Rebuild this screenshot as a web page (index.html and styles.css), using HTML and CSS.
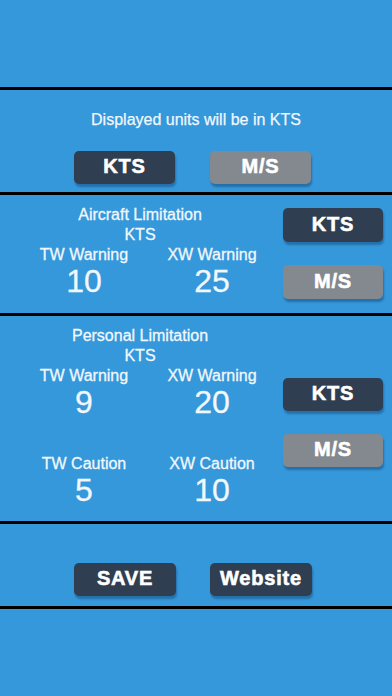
FILE: index.html
```html
<!DOCTYPE html>
<html lang="en">
<head>
<meta charset="UTF-8">
<meta name="viewport" content="width=device-width, initial-scale=1.0">
<title>Wind Limits</title>
<link rel="stylesheet" href="styles.css">
</head>
<body>

<div class="top-space"></div>
<div class="divider"></div>

<!-- units -->
<section class="units">
    <p class="units-text">Displayed units will be in KTS</p>
    <div class="btn-row">
        <button class="btn btn-dark">KTS</button>
        <button class="btn btn-gray">M/S</button>
    </div>
</section>

<div class="divider"></div>

<!-- aircraft limitation -->
<section class="limit">
    <div class="limit-data">
        <div class="limit-title">Aircraft Limitation<br>KTS</div>
        <div class="limit-grid">
            <div class="item"><div class="label">TW Warning</div><div class="value">10</div></div>
            <div class="item"><div class="label">XW Warning</div><div class="value">25</div></div>
        </div>
    </div>
    <div class="unit-btns aircraft-btns">
        <button class="btn btn-dark">KTS</button>
        <button class="btn btn-gray">M/S</button>
    </div>
</section>

<div class="divider"></div>

<!-- personal limitation -->
<section class="limit">
    <div class="limit-data">
        <div class="limit-title">Personal Limitation<br>KTS</div>
        <div class="limit-grid">
            <div class="item"><div class="label">TW Warning</div><div class="value">9</div></div>
            <div class="item"><div class="label">XW Warning</div><div class="value">20</div></div>
            <div class="item"><div class="label">TW Caution</div><div class="value">5</div></div>
            <div class="item"><div class="label">XW Caution</div><div class="value">10</div></div>
        </div>
    </div>
    <div class="unit-btns personal-btns">
        <button class="btn btn-dark">KTS</button>
        <button class="btn btn-gray">M/S</button>
    </div>
</section>

<div class="divider"></div>

<!-- save -->
<section class="actions">
    <button class="btn btn-dark">SAVE</button>
    <button class="btn btn-dark">Website</button>
</section>

<div class="divider"></div>

</body>
</html>
```

FILE: styles.css
```css
body {
    margin: 0;
    background-color: #3498db;
    font-family: "Liberation Sans", Arial, sans-serif;
    color: #f2f7fb;
    height: 696px;
    overflow: hidden;
}

.top-space {
    height: 87px;
}

.divider {
    height: 3px;
    background-color: #000;
}

/* units block */
.units {
    padding: 20px 0 8px 0;
}

.units-text {
    margin: 0;
    font-size: 16px;
    line-height: 19px;
    text-align: center;
    -webkit-text-stroke: 0.25px #f2f7fb;
}

.btn-row {
    display: flex;
    gap: 35px;
    padding-left: 74px;
    margin-top: 22px;
}

.btn {
    width: 101px;
    height: 33px;
    border: none;
    border-radius: 5px;
    padding: 0 0 2px 0;
    font-family: "Liberation Sans", Arial, sans-serif;
    font-weight: bold;
    font-size: 20px;
    letter-spacing: 0.8px;
    color: #fff;
    -webkit-text-stroke: 0.6px #fff;
    box-shadow: 1px 3px 2px rgba(10, 40, 80, 0.35);
    cursor: pointer;
}

.btn-dark {
    background-color: #2f3e50;
}

.btn-gray {
    background-color: #83898f;
}

/* limitation blocks */
.limit {
    display: flex;
    padding: 10px 0 14px 0;
}

.limit-data {
    padding-left: 20px;
    width: 256px;
    -webkit-text-stroke: 0.3px #f2f7fb;
}

.limit-title {
    width: 240px;
    text-align: center;
    font-size: 16px;
    line-height: 20px;
}

.limit-grid {
    display: grid;
    grid-template-columns: 128px 128px;
    row-gap: 35px;
}

.item {
    text-align: center;
}

.label {
    font-size: 16px;
    line-height: 20px;
}

.value {
    font-size: 32px;
    line-height: 33px;
}

.unit-btns {
    margin-left: auto;
    margin-right: 9px;
    display: flex;
    flex-direction: column;
    gap: 23px;
}

.unit-btns .btn {
    width: 100px;
}

.aircraft-btns {
    padding-top: 3px;
}

.aircraft-btns .btn {
    height: 34px;
}

.personal-btns {
    padding-top: 52px;
}

/* bottom buttons */
.actions {
    display: flex;
    gap: 34px;
    padding: 39px 0 10px 74px;
}

.actions .btn {
    width: 102px;
}
```
